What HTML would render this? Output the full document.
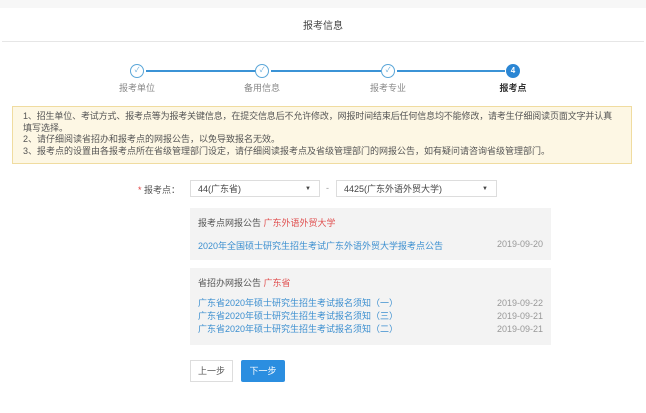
<!DOCTYPE html><html><head><meta charset="utf-8"><style>
body{margin:0;width:646px;height:413px;background:#fff;font-family:"Liberation Sans","Noto Sans CJK SC",sans-serif;font-size:9px;color:#555;position:relative;overflow:hidden}
.a{position:absolute}
.c{width:14px;height:14px;border:1px solid #5aa6d8;border-radius:50%;box-sizing:border-box;color:#5aa6d8;font-size:7px;text-align:center;line-height:12px;background:#fff}
.l{height:2px;background:#3b93d6;top:70px}
.lab{width:60px;text-align:center;top:81px;font-size:9px;color:#888}
.sel{border:1px solid #ddd;height:17px;top:180px;line-height:16px;padding-left:7px;box-sizing:border-box;color:#444;font-size:9px}
.sel span{position:absolute;right:8px;font-size:6px;color:#444}
.p{background:#f3f3f3;left:190px;width:361px}
.bl{color:#3c8fd0}.d{color:#999;position:absolute;right:0}
</style></head><body>
<div class="a" style="left:0;top:0;width:646px;height:8px;background:#f7f7f7"></div>
<div class="a" style="left:0;top:17px;width:646px;text-align:center;font-size:10px;color:#444">报考信息</div>
<div class="a" style="left:2px;top:41px;width:642px;height:1px;background:#e6e6e6"></div>
<div class="a l" style="left:146px;width:110px"></div>
<div class="a l" style="left:271px;width:110px"></div>
<div class="a l" style="left:397px;width:108px"></div>
<div class="a c" style="left:130px;top:64px">✓</div>
<div class="a c" style="left:255px;top:64px">✓</div>
<div class="a c" style="left:381px;top:64px">✓</div>
<div class="a c" style="left:506px;top:64px;background:#2b86d4;border-color:#2b86d4;color:#fff;font-size:8px;font-weight:bold">4</div>
<div class="a lab" style="left:107px">报考单位</div>
<div class="a lab" style="left:232px">备用信息</div>
<div class="a lab" style="left:358px">报考专业</div>
<div class="a lab" style="left:483px;color:#333;font-weight:bold">报考点</div>
<div class="a" style="left:12px;top:106px;width:620px;height:58px;background:#fdf7e4;border:1px solid #f0dca0;box-sizing:border-box;padding:4px 4px 4px 10px;font-size:9px;line-height:11.5px;color:#555;white-space:nowrap"><span style="letter-spacing:-0.15px">1、招生单位、考试方式、报考点等为报考关键信息，在提交信息后不允许修改，网报时间结束后任何信息均不能修改，请考生仔细阅读页面文字并认真</span><br>填写选择。<br>2、请仔细阅读省招办和报考点的网报公告，以免导致报名无效。<br>3、报考点的设置由各报考点所在省级管理部门设定，请仔细阅读报考点及省级管理部门的网报公告，如有疑问请咨询省级管理部门。</div>
<div class="a" style="left:138px;top:183px;color:#555"><span style="color:#e04040">*</span> 报考点：</div>
<div class="a sel" style="left:190px;width:130px">44(广东省)<span>▼</span></div>
<div class="a" style="left:326px;top:183px;color:#999">-</div>
<div class="a sel" style="left:336px;width:161px">4425(广东外语外贸大学)<span>▼</span></div>
<div class="a p" style="top:208px;height:52px">
<div class="a" style="left:8px;top:8px;color:#555">报考点网报公告 <span style="color:#e05050">广东外语外贸大学</span></div>
<div class="a bl" style="left:8px;top:31px;width:345px">2020年全国硕士研究生招生考试广东外语外贸大学报考点公告<span class="d">2019-09-20</span></div></div>
<div class="a p" style="top:268px;height:77px">
<div class="a" style="left:8px;top:8px;color:#555">省招办网报公告 <span style="color:#e05050">广东省</span></div>
<div class="a bl" style="left:8px;top:29px;width:345px;line-height:13px">广东省2020年硕士研究生招生考试报名须知（一）<span class="d">2019-09-22</span><br>广东省2020年硕士研究生招生考试报名须知（三）<span class="d">2019-09-21</span><br>广东省2020年硕士研究生招生考试报名须知（二）<span class="d">2019-09-21</span></div></div>
<div class="a" style="left:190px;top:360px;width:43px;height:22px;border:1px solid #ddd;box-sizing:border-box;text-align:center;line-height:20px;color:#555">上一步</div>
<div class="a" style="left:241px;top:360px;width:44px;height:22px;background:#2b8ee0;border-radius:2px;text-align:center;line-height:22px;color:#fff">下一步</div>
</body></html>
